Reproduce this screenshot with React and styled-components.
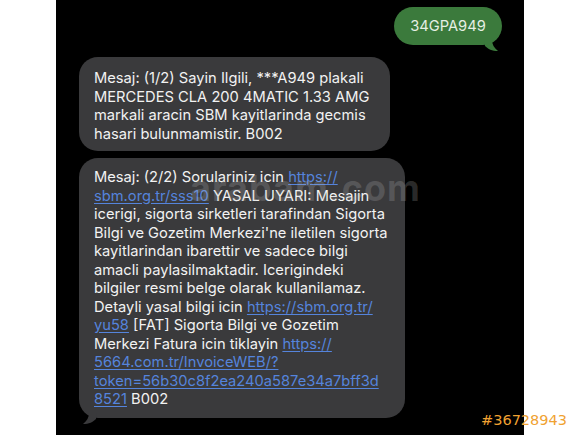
import React from 'react'
import styled, { createGlobalStyle } from 'styled-components'

const GlobalStyle = createGlobalStyle`
  html, body {
    margin: 0;
    padding: 0;
    background: #ffffff;
  }
`

const firstMessage = [
  'Mesaj: (1/2) Sayin Ilgili, ***A949 plakali',
  'MERCEDES CLA 200 4MATIC 1.33 AMG',
  'markali aracin SBM kayitlarinda gecmis',
  'hasari bulunmamistir. B002'
]

// each line is a list of [text, isLink] pieces
const secondMessage = [
  [['Mesaj: (2/2) Sorulariniz icin ', false], ['https://', true]],
  [['sbm.org.tr/sss10', true], [' YASAL UYARI: Mesajin', false]],
  [['icerigi, sigorta sirketleri tarafindan Sigorta', false]],
  [["Bilgi ve Gozetim Merkezi'ne iletilen sigorta", false]],
  [['kayitlarindan ibarettir ve sadece bilgi', false]],
  [['amacli paylasilmaktadir. Icerigindeki', false]],
  [['bilgiler resmi belge olarak kullanilamaz.', false]],
  [['Detayli yasal bilgi icin ', false], ['https://sbm.org.tr/', true]],
  [['yu58', true], [' [FAT] Sigorta Bilgi ve Gozetim', false]],
  [['Merkezi Fatura icin tiklayin ', false], ['https://', true]],
  [['5664.com.tr/InvoiceWEB/?', true]],
  [['token=56b30c8f2ea240a587e34a7bff3d', true]],
  [['8521', true], [' B002', false]]
]

const App = () => (
  <Page>
    <GlobalStyle />
    <Screen>
      <Sent>
        34GPA949
        <TailRight viewBox='0 0 14 12'>
          <path d='M0 0 H8 C8 4 10 8 14 11 C8 11 4 9 1 6 Z' fill='#3b7a3c' />
        </TailRight>
      </Sent>
      <Received width={311} pad='12px 15px 8px'>
        {firstMessage.map(line => (
          <Line key={line}>{line}</Line>
        ))}
      </Received>
      <Received width={326} pad='10px 15px 9px'>
        {secondMessage.map((parts, i) => (
          <Line key={i}>
            {parts.map(([text, link], j) =>
              link ? <Link key={j}>{text}</Link> : <span key={j}>{text}</span>
            )}
          </Line>
        ))}
        <TailLeft viewBox='0 0 14 12'>
          <path d='M14 0 H6 C6 4 4 8 0 11 C6 11 10 9 13 6 Z' fill='#3a3a3c' />
        </TailLeft>
      </Received>
      <Watermark>arabam.com</Watermark>
    </Screen>
    <AdNumber>#36728943</AdNumber>
  </Page>
)

export default App

const Page = styled.div`
  position: relative;
  display: flex;
  justify-content: center;
  width: 580px;
  height: 435px;
  overflow: hidden;
  font-family: Inter, 'Liberation Sans', Arial, sans-serif;
`
const Screen = styled.div`
  position: relative;
  display: flex;
  flex-direction: column;
  align-items: flex-start;
  gap: 7px;
  width: 468px;
  height: 435px;
  box-sizing: border-box;
  padding: 7px 22px 0 23px;
  background: #000000;
`
const Bubble = styled.div`
  position: relative;
  box-sizing: border-box;
  border-radius: 19px;
  font-size: 14.7px;
  line-height: 18.5px;
  white-space: nowrap;
`
const Sent = styled(Bubble)`
  align-self: flex-end;
  width: 108px;
  height: 38px;
  margin-bottom: 5px;
  display: flex;
  align-items: center;
  justify-content: center;
  background: #3b7a3c;
  color: #e6efe4;
`
const Received = styled(Bubble)`
  width: ${props => props.width}px;
  padding: ${props => props.pad};
  background: #3a3a3c;
  color: #f2f2f2;
`
const Line = styled.div`
  display: block;
`
const Link = styled.span`
  color: #5584dc;
  text-decoration: underline;
  text-underline-offset: 2px;
`
const TailRight = styled.svg`
  position: absolute;
  right: 4px;
  bottom: -7px;
  width: 14px;
  height: 12px;
`
const TailLeft = styled.svg`
  position: absolute;
  left: 4px;
  bottom: -7px;
  width: 14px;
  height: 12px;
`
const Watermark = styled.div`
  position: absolute;
  left: 134px;
  top: 166px;
  font-size: 36px;
  font-weight: bold;
  letter-spacing: 1px;
  color: rgba(190, 190, 190, 0.22);
  pointer-events: none;
`
const AdNumber = styled.div`
  position: absolute;
  right: 13px;
  bottom: 7px;
  font-family: 'DejaVu Sans', sans-serif;
  font-size: 14.5px;
  color: #f0a232;
`
